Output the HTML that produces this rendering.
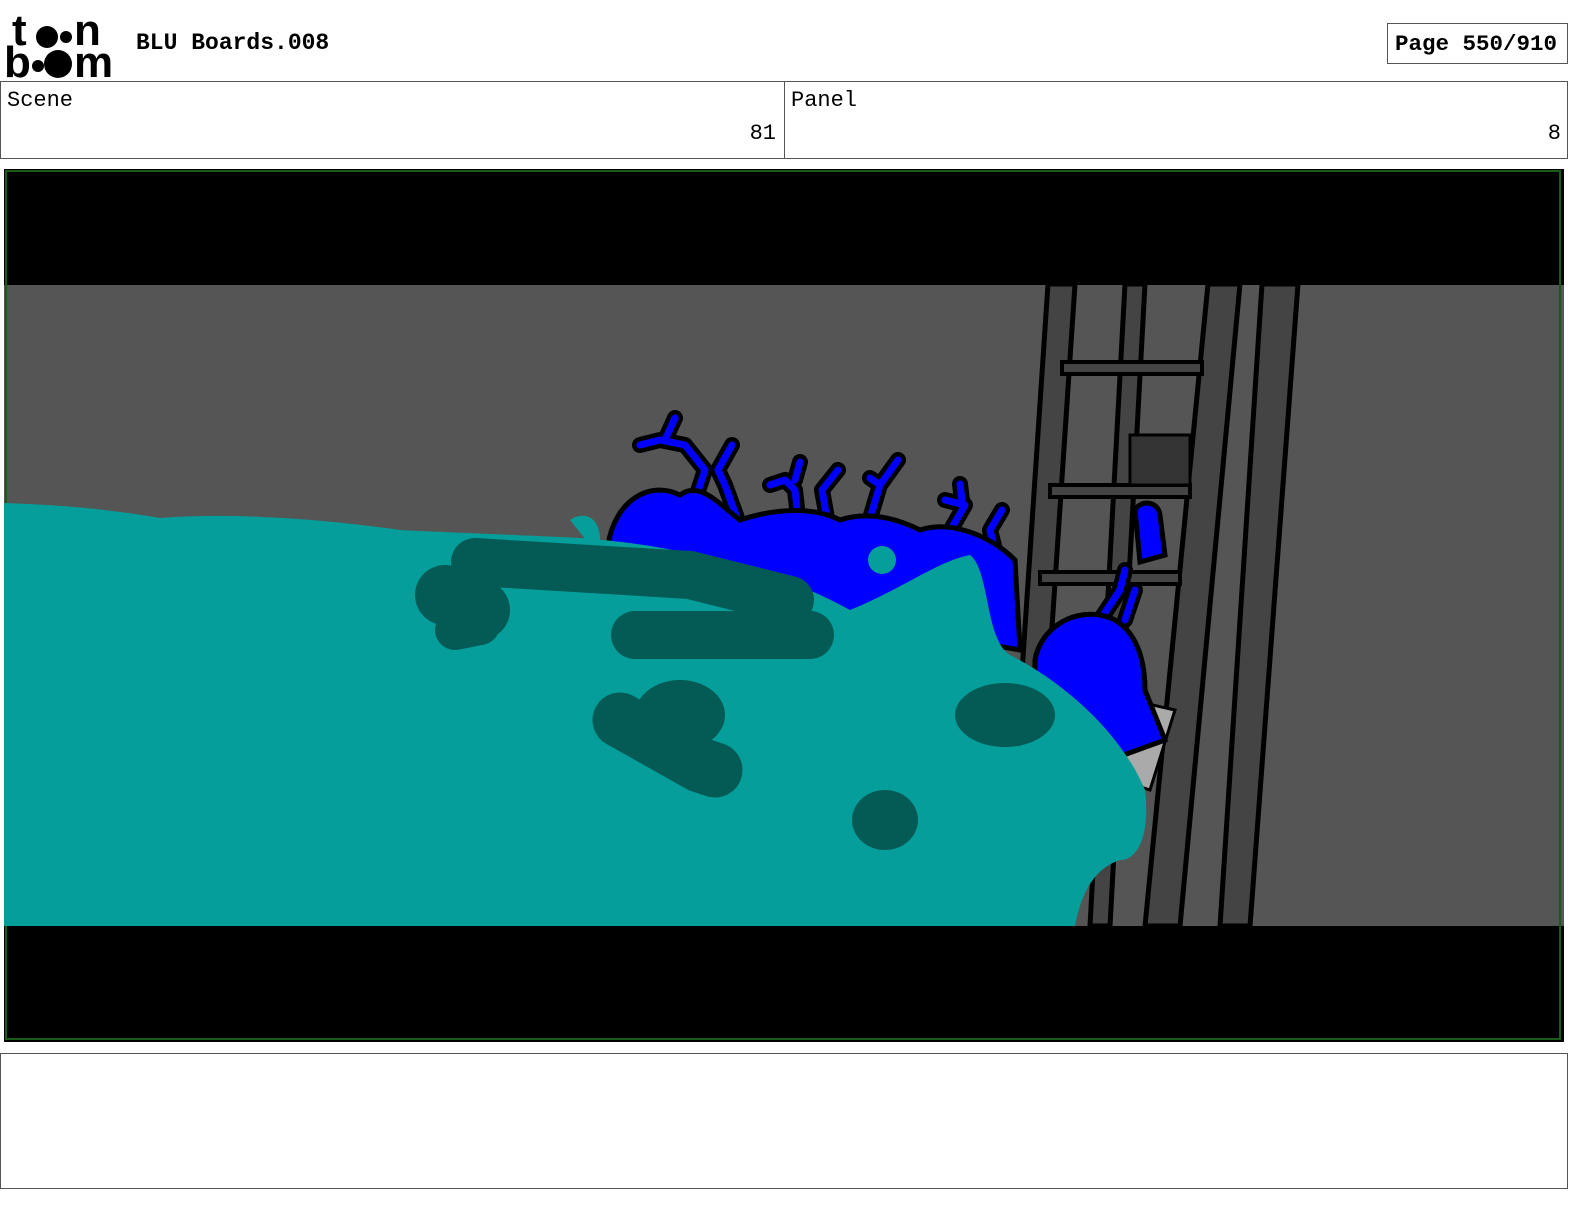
<!DOCTYPE html>
<html><head><meta charset="utf-8"><style>
html,body{margin:0;padding:0;background:#fff;width:1584px;height:1224px;overflow:hidden;position:relative;font-family:"Liberation Mono",monospace}
.abs{position:absolute}
.box{position:absolute;border:1px solid #555;box-sizing:border-box;background:#fff}
</style></head><body>
<div class="abs" style="left:4px;top:6px;width:112px;height:70px;font-family:'Liberation Sans',sans-serif;font-weight:bold;font-size:44px;line-height:30px;color:#000">
<div style="position:absolute;left:8px;top:10px">t</div>
<div style="position:absolute;left:32px;top:20px;width:22px;height:22px;border-radius:50%;background:#000"></div>
<div style="position:absolute;left:56px;top:25px;width:12px;height:12px;border-radius:50%;background:#000"></div>
<div style="position:absolute;left:70px;top:10px">n</div>
<div style="position:absolute;left:0px;top:42px">b</div>
<div style="position:absolute;left:28px;top:54px;width:12px;height:12px;border-radius:50%;background:#000"></div>
<div style="position:absolute;left:40px;top:44px;width:28px;height:28px;border-radius:50%;background:#000"></div>
<div style="position:absolute;left:70px;top:42px">m</div>
</div>
<div class="abs" style="left:136px;top:30px;font-size:23px;font-weight:bold">BLU Boards.008</div>
<div class="box" style="left:1387px;top:23px;width:181px;height:41px;font-size:22.5px;font-weight:bold;padding:7px 0 0 7px;white-space:nowrap">Page 550/910</div>
<div class="box" style="left:0;top:81px;width:785px;height:78px;font-size:22px"><span style="position:absolute;left:6px;top:6px">Scene</span><span style="position:absolute;right:8px;top:39px">81</span></div>
<div class="box" style="left:784px;top:81px;width:784px;height:78px;font-size:22px"><span style="position:absolute;left:6px;top:6px">Panel</span><span style="position:absolute;right:6px;top:39px">8</span></div>
<svg class="abs" style="left:0;top:0" width="1584" height="1224" viewBox="0 0 1584 1224">
<rect x="4" y="169" width="1560" height="873" fill="#555"/>
<g stroke="#000" stroke-width="5" fill="#444">
<polygon points="1048,284 1075,284 1032,926 1005,926"/>
<polygon points="1125,284 1145,284 1110,926 1090,926"/>
<polygon points="1208,284 1240,284 1180,926 1145,926"/>
<polygon points="1262,284 1298,284 1250,926 1220,926"/>
</g>
<g stroke="#000" stroke-width="4" fill="#444">
<rect x="1062" y="362" width="140" height="12"/>
<rect x="1050" y="485" width="140" height="12"/>
<rect x="1040" y="572" width="140" height="12"/>
</g>
<rect x="1130" y="435" width="60" height="50" fill="#333" stroke="#000" stroke-width="3"/>
<polygon points="1130,700 1175,710 1150,790 1120,780" fill="#aaa" stroke="#000" stroke-width="3"/>
<rect x="4" y="169" width="1560" height="116" fill="#000"/>
<rect x="4" y="926" width="1560" height="116" fill="#000"/>
<rect x="6" y="171" width="1554" height="868" fill="none" stroke="#1a5a1a" stroke-width="2"/>
<g fill="none" stroke="#000" stroke-width="16" stroke-linecap="round" stroke-linejoin="round">
<path id="arms" d="M690,515 L705,470 L685,445 L660,440 M660,440 L640,445 M665,440 L675,418 M745,540 L725,485 L718,470 L732,445 M800,535 L795,490 L785,480 L770,485 M795,480 L800,462 M830,535 L822,490 L838,470 M862,545 L880,485 L870,478 M880,485 L898,460 M942,545 L965,505 L945,500 M962,500 L960,484 M1000,570 L990,530 L1002,510 M1100,620 L1120,590 L1125,570 M1125,620 L1135,590"/>
</g>
<g fill="none" stroke="#0000ff" stroke-width="7" stroke-linecap="round" stroke-linejoin="round">
<path d="M690,515 L705,470 L685,445 L660,440 M660,440 L640,445 M665,440 L675,418 M745,540 L725,485 L718,470 L732,445 M800,535 L795,490 L785,480 L770,485 M795,480 L800,462 M830,535 L822,490 L838,470 M862,545 L880,485 L870,478 M880,485 L898,460 M942,545 L965,505 L945,500 M962,500 L960,484 M1000,570 L990,530 L1002,510 M1100,620 L1120,590 L1125,570 M1125,620 L1135,590"/>
</g>
<g fill="#0000ff" stroke="#000" stroke-width="5">
<path d="M608,545 C615,500 650,480 680,495 C700,480 720,505 740,520 C770,510 810,505 840,520 C870,510 900,520 920,530 C950,520 990,535 1015,560 L1020,650 L850,620 L608,560 Z"/>
<path d="M1035,660 C1040,630 1070,610 1100,615 C1130,620 1145,650 1145,690 L1165,740 L1110,760 L1035,700 Z"/>
<path d="M1135,510 C1140,500 1158,500 1160,515 L1165,555 L1140,562 Z"/>
</g>
<path d="M4,503 C60,505 100,508 160,518 C240,512 330,520 400,530 C460,533 520,535 560,537 C640,540 760,560 850,610 C900,590 940,560 970,555 C990,570 985,640 1010,655 C1060,680 1120,730 1145,790 C1150,830 1140,860 1120,860 C1090,870 1080,900 1075,926 L4,926 Z" fill="#059e9a"/>
<path d="M570,520 C585,510 600,518 600,540 L590,545 Z" fill="#059e9a"/>
<g fill="none" stroke="#045a55" stroke-linecap="round" stroke-linejoin="round">
<path d="M475,562 L690,575 L790,600" stroke-width="48"/>
<path d="M445,595 L480,610" stroke-width="60"/>
<path d="M455,630 L480,625" stroke-width="40"/>
<path d="M635,635 L810,635" stroke-width="48"/>
<path d="M620,720 L700,765 L715,770" stroke-width="55"/>
</g>
<g fill="#045a55">
<ellipse cx="680" cy="715" rx="45" ry="35"/>
<ellipse cx="885" cy="820" rx="33" ry="30"/>
<ellipse cx="1005" cy="715" rx="50" ry="32"/>
</g>
<circle cx="882" cy="560" r="14" fill="#059e9a"/>
</svg>
<div class="box" style="left:0;top:1053px;width:1568px;height:136px"></div>
</body></html>
